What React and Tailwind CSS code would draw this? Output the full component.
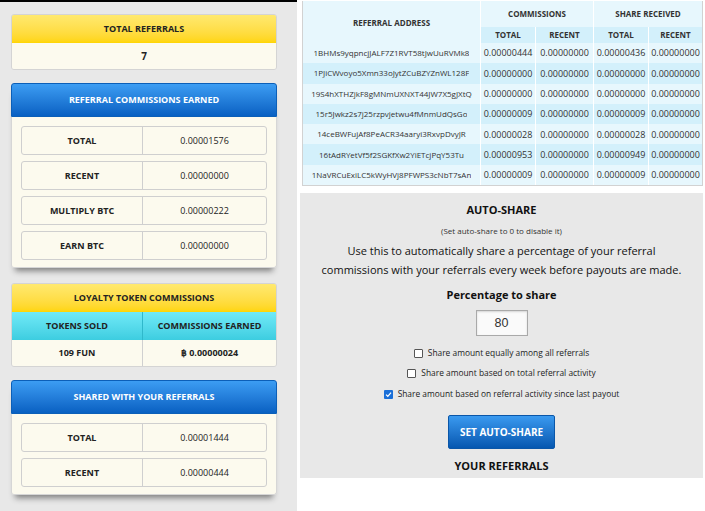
import React from "react";

const rows = [
  ["1BHMs9yqpncjJALF7Z1RVT58tJwUuRVMk8", "0.00000444", "0.00000000", "0.00000436", "0.00000000"],
  ["1PJiCWvoyo5Xmn33oJytZCuBZYZnWL128F", "0.00000000", "0.00000000", "0.00000000", "0.00000000"],
  ["19S4hXTHZjkF8gMNmUXNXT44JW7X5gJXtQ", "0.00000000", "0.00000000", "0.00000000", "0.00000000"],
  ["15r5Jwkz2s7j25rzpvjetwu4fMnmUdQsGo", "0.00000009", "0.00000000", "0.00000009", "0.00000000"],
  ["14ceBWFujAf8PeACR34aaryi3RxvpDvyJR", "0.00000028", "0.00000000", "0.00000028", "0.00000000"],
  ["16tAdRYetVf5f2SGKfXw2YiETcjPqY53Tu", "0.00000953", "0.00000000", "0.00000949", "0.00000000"],
  ["1NaVRCuExiLC5kWyHVj8PFWPS3cNbT7sAn", "0.00000009", "0.00000000", "0.00000009", "0.00000000"],
];

function StatRow({ label, value }) {
  return (
    <div className="flex h-[29px] rounded-[3px] border border-[#cfcfcf] text-[9px] text-[#222]">
      <div className="flex w-[121px] items-center justify-center border-r border-[#cfcfcf] font-bold">{label}</div>
      <div className="flex flex-1 items-center justify-center">{value}</div>
    </div>
  );
}

function BlueCard({ title, items, className }) {
  return (
    <div className={"rounded-[3px] shadow-[0_7px_6px_-4px_rgba(0,0,0,0.45)] " + className}>
      <div className="flex h-[34px] items-center justify-center rounded-t-[3px] border border-[#0b5fb8] bg-linear-to-b from-[#3c9df3] to-[#0860c2] text-[9px] font-bold text-white">
        {title}
      </div>
      <div className="flex flex-col gap-[6px] rounded-b-[3px] border border-t-0 border-[#d6d6d6] bg-[#fcfaee] px-[9px] pb-[7px] pt-[9px]">
        {items.map(([l, v]) => (
          <StatRow key={l} label={l} value={v} />
        ))}
      </div>
    </div>
  );
}

function Check({ checked }) {
  return checked ? (
    <span className="inline-flex h-[9px] w-[9px] items-center justify-center rounded-[1px] bg-[#1a6fd8]">
      <svg width="7" height="7" viewBox="0 0 10 10">
        <path d="M1.5 5.2 L4 7.6 L8.6 2.2" fill="none" stroke="white" strokeWidth="1.8" />
      </svg>
    </span>
  ) : (
    <span className="inline-block h-[9px] w-[9px] rounded-[1px] border border-[#555] bg-white" />
  );
}

export default function App() {
  return (
    <div className="flex h-[511px] w-[705px] overflow-hidden bg-white font-['Open_Sans',sans-serif] text-[#222]">
      {/* Left column */}
      <div className="h-full w-[297px] shrink-0 border-t-2 border-black bg-[#e8e8e8] pl-[11px] pt-[12px]">
        <div className="w-[266px]">
          {/* Total referrals */}
          <div className="overflow-hidden rounded-[3px] border border-[#d4d4d4]">
            <div className="flex h-[28px] items-center justify-center bg-linear-to-b from-[#ffe96e] to-[#ffd500] text-[9px] font-bold">
              TOTAL REFERRALS
            </div>
            <div className="flex h-[26px] items-center justify-center bg-[#fcfaee] text-[10px] font-bold">7</div>
          </div>

          <BlueCard
            className="mt-[13px]"
            title="REFERRAL COMMISSIONS EARNED"
            items={[
              ["TOTAL", "0.00001576"],
              ["RECENT", "0.00000000"],
              ["MULTIPLY BTC", "0.00000222"],
              ["EARN BTC", "0.00000000"],
            ]}
          />

          {/* Loyalty */}
          <div className="mt-[15px] overflow-hidden rounded-[3px] border border-[#d4d4d4] text-[9px] font-bold">
            <div className="flex h-[28px] items-center justify-center bg-linear-to-b from-[#ffe96e] to-[#ffd500]">
              LOYALTY TOKEN COMMISSIONS
            </div>
            <div className="flex h-[28px] bg-linear-to-b from-[#70eaf8] to-[#3ccde0]">
              <div className="flex w-[131px] items-center justify-center border-r border-[#2fb8cb]">TOKENS SOLD</div>
              <div className="flex flex-1 items-center justify-center">COMMISSIONS EARNED</div>
            </div>
            <div className="flex h-[26px] bg-[#fcfaee]">
              <div className="flex w-[131px] items-center justify-center border-r border-[#d0d0d0]">109 FUN</div>
              <div className="flex flex-1 items-center justify-center">฿ 0.00000024</div>
            </div>
          </div>

          <BlueCard
            className="mt-[13px]"
            title="SHARED WITH YOUR REFERRALS"
            items={[
              ["TOTAL", "0.00001444"],
              ["RECENT", "0.00000444"],
            ]}
          />
        </div>
      </div>

      {/* Right column */}
      <div className="flex-1 bg-white">
        {/* Table */}
        <div className="ml-[5px] mt-[1px] w-[401px] border-x border-b border-[#d2d2d2] bg-[#e7f7fd] text-[#333]">
          <div className="flex h-[42px] text-[8px] font-bold">
            <div className="flex w-[178px] items-center justify-center border-r border-white pt-[2px]">REFERRAL ADDRESS</div>
            <div className="flex flex-1 flex-col">
              <div className="flex h-[26px]">
                <div className="flex w-[113px] items-center justify-center border-r border-white">COMMISSIONS</div>
                <div className="flex flex-1 items-center justify-center">SHARE RECEIVED</div>
              </div>
              <div className="flex flex-1 bg-[#d3f0fb]">
                <div className="flex w-[55px] items-center justify-center border-r border-white">TOTAL</div>
                <div className="flex w-[58px] items-center justify-center border-r border-white">RECENT</div>
                <div className="flex w-[55px] items-center justify-center border-r border-white">TOTAL</div>
                <div className="flex flex-1 items-center justify-center">RECENT</div>
              </div>
            </div>
          </div>
          {rows.map((r, i) => (
            <div key={i} className={"flex h-[20.3px] text-[9px] " + (i % 2 === 1 ? "bg-[#d3f0fb]" : "")}>
              <div className="flex w-[178px] items-center justify-center overflow-hidden whitespace-nowrap border-r border-white px-[3px] text-[8px]">
                <span className="block overflow-hidden">{r[0]}</span>
              </div>
              <div className="flex w-[55px] items-center justify-center border-r border-white">{r[1]}</div>
              <div className="flex w-[58px] items-center justify-center border-r border-white">{r[2]}</div>
              <div className="flex w-[55px] items-center justify-center border-r border-white">{r[3]}</div>
              <div className="flex flex-1 items-center justify-center">{r[4]}</div>
            </div>
          ))}
        </div>

        {/* Auto share panel */}
        <div className="ml-[3px] mt-[7px] flex h-[285px] w-[403px] flex-col items-center bg-[#e8e8e8] pt-[9px] text-[#111]">
          <div className="text-[11px] font-bold leading-[15px]">AUTO-SHARE</div>
          <div className="mt-[8px] text-[8px] leading-[12px] text-[#333]">(Set auto-share to 0 to disable it)</div>
          <div className="mt-[4px] text-center text-[11px] leading-[19px]">
            Use this to automatically share a percentage of your referral
            <br />
            commissions with your referrals every week before payouts are made.
          </div>
          <div className="mt-[8px] text-[11px] font-bold leading-[15px]">Percentage to share</div>
          <div className="mt-[8px] flex h-[26px] w-[52px] items-center justify-center border border-[#a9a9a9] bg-[#fafafa] font-['Liberation_Sans',sans-serif] text-[12.5px] text-[#333] shadow-[inset_0_1px_2px_rgba(0,0,0,0.15)]">
            80
          </div>
          <div className="mt-[10px] flex h-[14px] items-center gap-[5px] text-[8.4px] text-[#222]">
            <Check />
            <span>Share amount equally among all referrals</span>
          </div>
          <div className="mt-[6px] flex h-[14px] items-center gap-[5px] text-[8.4px] text-[#222]">
            <Check />
            <span>Share amount based on total referral activity</span>
          </div>
          <div className="mt-[7px] flex h-[14px] items-center gap-[5px] text-[8.4px] text-[#222]">
            <Check checked />
            <span>Share amount based on referral activity since last payout</span>
          </div>
          <div className="mt-[14px] flex h-[34px] w-[107px] items-center justify-center rounded-[2px] border border-[#0a56a8] bg-linear-to-b from-[#3a9af0] to-[#0557b0] text-[10px] font-bold text-white">
            SET AUTO-SHARE
          </div>
          <div className="mt-[9px] text-[11px] font-bold leading-[15px]">YOUR REFERRALS</div>
        </div>
      </div>
    </div>
  );
}
